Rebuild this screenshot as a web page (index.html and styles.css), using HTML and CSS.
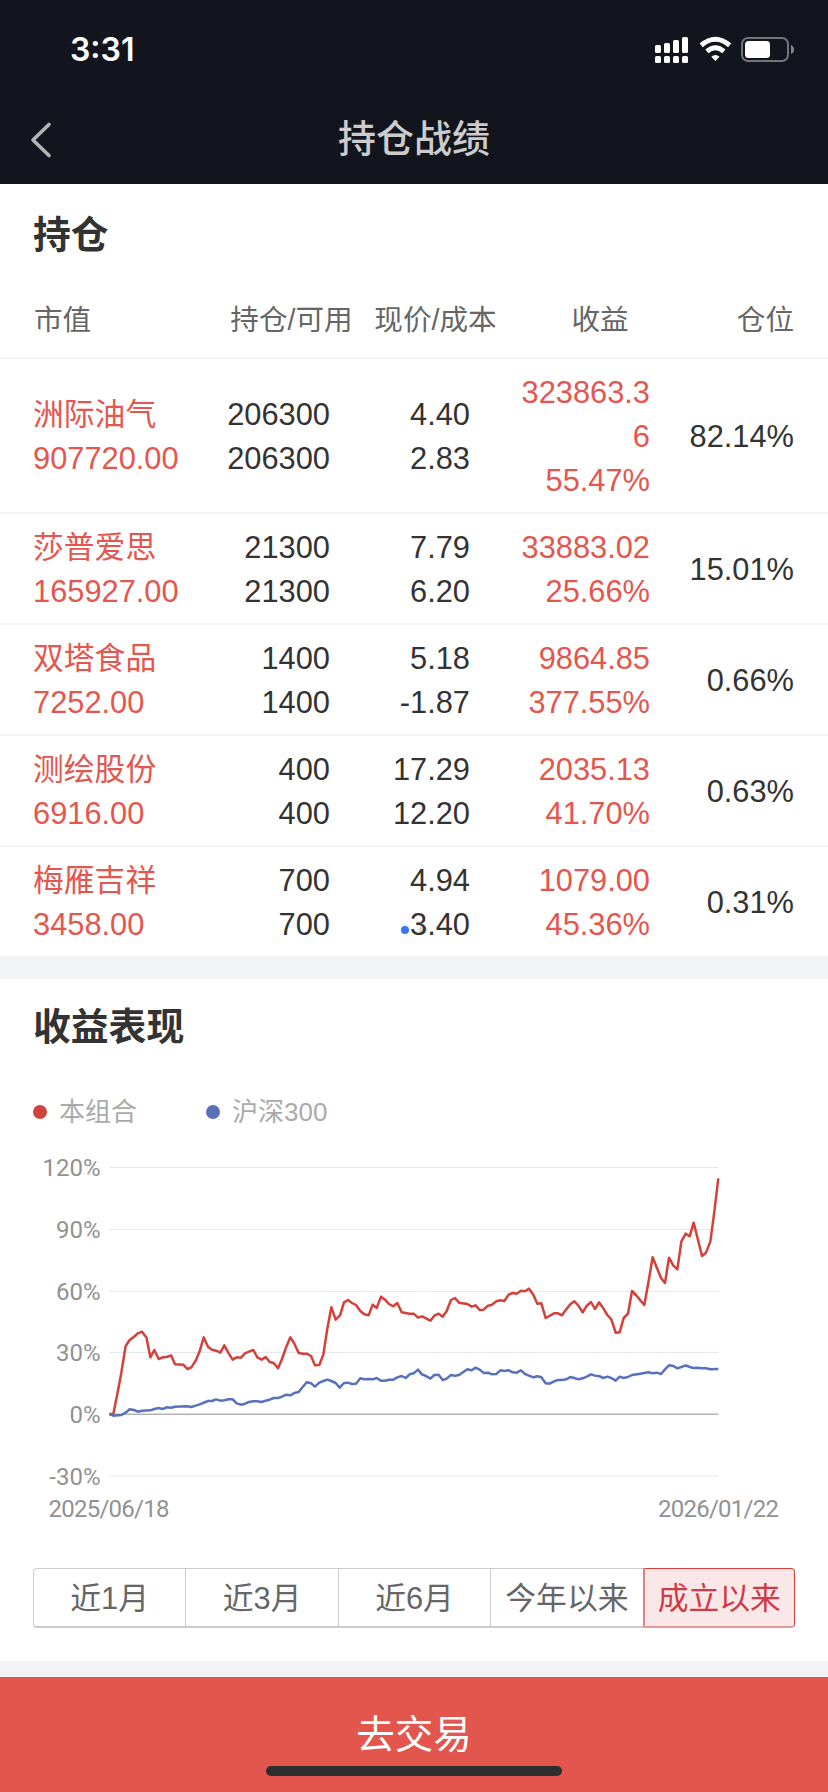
FILE: index.html
```html
<!DOCTYPE html>
<html lang="zh-CN">
<head>
  <meta charset="UTF-8">
  <meta name="viewport" content="width=device-width, initial-scale=1.0">
  <title>持仓战绩</title>
  <link rel="stylesheet" href="styles.css">
</head>
<body>
  <header class="header">
    <div class="status">
      <span class="time">3:31</span>
      <svg class="status-icons" width="140" height="28" viewBox="0 0 140 28">
        <g fill="#fff">
          <rect x="1" y="9" width="6" height="8" rx="1.5"/>
          <rect x="10" y="7" width="6" height="10" rx="1.5"/>
          <rect x="19" y="4" width="6" height="13" rx="1.5"/>
          <rect x="28" y="1" width="6" height="16" rx="1.5"/>
          <rect x="1" y="20" width="6" height="7" rx="1.5"/>
          <rect x="10" y="20" width="6" height="7" rx="1.5"/>
          <rect x="19" y="20" width="6" height="7" rx="1.5"/>
          <rect x="28" y="20" width="6" height="7" rx="1.5"/>
          <path d="M61.4 25 L57.3 20.8 Q61.4 17.2 65.5 20.8 Z"/>
        </g>
        <g fill="none" stroke="#fff" stroke-width="4.8">
          <path d="M47.2 9.4 Q61.4 -2.8 75.6 9.4"/>
          <path d="M52.9 15.4 Q61.4 8 69.9 15.4"/>
        </g>
        <rect x="88" y="2" width="46" height="23" rx="6" fill="none" stroke="#72757b" stroke-width="2"/>
        <rect x="91" y="5" width="25" height="17" rx="3.5" fill="#fff"/>
        <path d="M137 9 Q140 10.5 140 13.5 Q140 16.5 137 18 Z" fill="#85878c"/>
      </svg>
    </div>
    <div class="nav">
      <svg class="back" width="24" height="40" viewBox="0 0 24 40">
        <path d="M20 4.5 L4 20 L20 35.5" fill="none" stroke="#b4b4b4" stroke-width="3.6" stroke-linecap="round" stroke-linejoin="round"/>
      </svg>
      <h1>持仓战绩</h1>
    </div>
  </header>

  <section class="holdings">
    <h2>持仓</h2>
    <div class="table-head">
      <span>市值</span>
      <span>持仓/可用</span>
      <span>现价/成本</span>
      <span>收益</span>
      <span>仓位</span>
    </div>
    <div class="row">
      <div class="name">洲际油气<br>907720.00</div>
      <div>206300<br>206300</div>
      <div>4.40<br>2.83</div>
      <div class="profit">323863.36<br>55.47%</div>
      <div>82.14%</div>
    </div>
    <div class="row">
      <div class="name">莎普爱思<br>165927.00</div>
      <div>21300<br>21300</div>
      <div>7.79<br>6.20</div>
      <div class="profit">33883.02<br>25.66%</div>
      <div>15.01%</div>
    </div>
    <div class="row">
      <div class="name">双塔食品<br>7252.00</div>
      <div>1400<br>1400</div>
      <div>5.18<br>-1.87</div>
      <div class="profit">9864.85<br>377.55%</div>
      <div>0.66%</div>
    </div>
    <div class="row">
      <div class="name">测绘股份<br>6916.00</div>
      <div>400<br>400</div>
      <div>17.29<br>12.20</div>
      <div class="profit">2035.13<br>41.70%</div>
      <div>0.63%</div>
    </div>
    <div class="row">
      <div class="name">梅雁吉祥<br>3458.00</div>
      <div>700<br>700</div>
      <div>4.94<br><span class="marked">3.40</span></div>
      <div class="profit">1079.00<br>45.36%</div>
      <div>0.31%</div>
    </div>
  </section>

  <section class="performance">
    <h2>收益表现</h2>
    <div class="legend">
      <span class="legend-item"><i class="dot red"></i>本组合</span>
      <span class="legend-item"><i class="dot blue"></i>沪深300</span>
    </div>
    <svg class="chart" width="828" height="390" viewBox="0 0 828 390">
      <g class="grid">
        <path d="M109.5 17.5H718.5M109.5 79.5H718.5M109.5 141.5H718.5M109.5 202.5H718.5M109.5 326H718.5"/>
        <path class="zero" d="M109.5 264.2H718.5"/>
      </g>
      <g class="axis">
        <text x="100.5" y="26" text-anchor="end">120%</text>
        <text x="100.5" y="88" text-anchor="end">90%</text>
        <text x="100.5" y="149.5" text-anchor="end">60%</text>
        <text x="100.5" y="211" text-anchor="end">30%</text>
        <text x="100.5" y="273" text-anchor="end">0%</text>
        <text x="100.5" y="334.5" text-anchor="end">-30%</text>
        <text x="48.5" y="366.5" textLength="121">2025/06/18</text>
        <text x="658" y="366.5" textLength="121">2026/01/22</text>
      </g>
      <g class="lines" transform="translate(90 0) scale(.33333)">
        <polyline class="line-red" points="58,792 70,792 82,732 94,668 107,588 119,570 132,560 144,550 156,545 169,562 181,622 193,600 206,627 218,622 230,621 243,616 255,643 280,644 292,657 304,652 317,632 329,604 341,562 354,590 366,599 378,602 391,608 403,586 416,610 428,629 440,622 453,623 465,610 477,605 490,600 502,622 515,629 527,621 539,636 551,639 564,655 576,627 589,590 601,562 613,581 626,609 638,611 650,611 663,618 675,646 688,645 700,614 712,536 724,472 737,509 750,496 762,457 774,450 786,459 798,465 811,483 823,493 836,496 848,464 860,474 873,440 885,449 897,462 910,469 922,459 935,487 959,491 971,491 984,503 996,499 1008,505 1021,512 1033,497 1046,491 1058,500 1070,483 1083,450 1095,444 1107,458 1132,462 1145,470 1157,466 1169,480 1181,479 1194,467 1206,464 1219,454 1231,451 1243,453 1256,434 1268,429 1280,431 1293,422 1305,424 1317,416 1330,434 1342,461 1354,460 1367,504 1392,490 1404,490 1416,496 1429,478 1441,463 1453,454 1466,468 1478,487 1490,468 1503,456 1515,477 1527,457 1540,475 1552,495 1564,508 1577,548 1589,547 1601,504 1614,491 1626,423 1638,435 1651,451 1663,465 1675,398 1688,322 1700,352 1713,384 1725,399 1737,323 1750,347 1762,358 1774,275 1787,251 1799,259 1811,218 1824,270 1836,318 1848,308 1861,275 1873,185 1885,85"/>
        <polyline class="line-blue" points="58,792 70,797 94,795 107,788 119,778 132,780 144,785 156,782 181,781 193,777 206,774 218,777 230,772 243,773 255,770 292,769 304,771 317,767 329,763 354,753 366,753 378,748 391,752 403,751 416,748 428,748 440,760 453,764 465,761 477,756 490,754 502,754 515,756 527,752 539,749 551,744 564,744 576,740 589,734 601,736 613,729 626,726 638,711 650,697 663,700 675,710 688,698 700,693 712,689 724,693 737,699 749,713 762,699 774,698 786,702 798,701 811,685 823,688 836,687 848,688 860,684 873,692 885,692 897,689 910,689 922,682 935,678 947,684 959,673 971,670 984,659 996,673 1008,678 1021,686 1033,675 1046,674 1058,690 1070,686 1083,675 1095,677 1107,675 1119,667 1132,658 1145,661 1157,653 1169,659 1181,669 1194,668 1206,673 1219,672 1231,661 1243,663 1256,661 1268,667 1280,668 1293,661 1305,672 1317,677 1330,682 1342,679 1354,682 1367,700 1379,701 1392,694 1404,690 1416,690 1429,688 1441,681 1453,684 1466,688 1478,685 1490,680 1503,673 1515,677 1527,678 1540,684 1552,680 1564,684 1577,692 1589,680 1601,684 1614,681 1626,675 1651,671 1675,667 1688,670 1700,668 1713,672 1725,658 1737,646 1750,648 1762,655 1774,651 1787,646 1799,651 1811,654 1824,653 1836,655 1848,655 1861,658 1885,657"/>
      </g>
    </svg>
    <div class="tabs">
      <button>近1月</button>
      <button>近3月</button>
      <button>近6月</button>
      <button>今年以来</button>
      <button class="active">成立以来</button>
    </div>
  </section>

  <footer class="trade">
    <span>去交易</span>
    <i class="home-bar"></i>
  </footer>
</body>
</html>
```

FILE: styles.css
```css
* {
  box-sizing: border-box;
}

body {
  margin: 0;
  height: 1792px;
  display: flex;
  flex-direction: column;
  font-family: "Liberation Sans", "Noto Sans CJK SC", sans-serif;
  font-size: 30.8px;
  line-height: 44px;
  color: #333;
  background-color: #f2f3f5;
}

.header {
  height: 184px;
  background-color: #12151e;
}

.status {
  height: 96px;
  padding: 4px 34px 0 70px;
  display: flex;
  align-items: center;
  justify-content: space-between;
}

.time {
  font-family: Inter, sans-serif;
  font-size: 32px;
  font-weight: 600;
  color: #fff;
}

.status-icons {
  display: block;
}

.nav {
  height: 88px;
  padding: 0 29px;
  display: grid;
  grid-template-columns: 24px 1fr 24px;
  align-items: center;
}

h1 {
  margin: 0;
  padding-bottom: 2px;
  font-size: 38px;
  font-weight: 500;
  color: #ccc;
  text-align: center;
}

h2 {
  margin: 0;
  padding: 0 33px;
  font-size: 37.8px;
  font-weight: 700;
}

.holdings {
  height: 772px;
  background-color: #fff;
}

.holdings h2 {
  line-height: 102px;
}

.table-head {
  height: 73px;
  padding: 0 34px;
  display: grid;
  grid-template-columns: 179px 157px 131px 198px 95px;
  border-bottom: 2px solid #f4f4f5;
  font-size: 28.6px;
  line-height: 68px;
  color: #666;
  text-align: center;
}

.table-head span:first-child {
  text-align: left;
}

.table-head span:last-child {
  text-align: right;
}

.row {
  padding: 12px 34px 9px 33px;
  display: grid;
  grid-template-columns: 161px 136px 140px 180px 144px;
  align-items: center;
  border-bottom: 2px solid #f4f4f5;
  text-align: right;
}

.row:last-child {
  border-bottom: none;
}

.row .name {
  color: #e4564e;
  text-align: left;
}

.row .profit {
  padding-left: 40px;
  color: #e4564e;
  word-break: break-all;
}

.marked {
  position: relative;
  z-index: 0;
}

.marked::before,
.marked::after {
  content: "";
  position: absolute;
  left: -9px;
  top: 19px;
  width: 8px;
  height: 8px;
  border-radius: 50%;
  background-color: #3478f6;
}

.marked::after {
  left: 9px;
  z-index: -1;
  background-color: #d4d4d4;
}

.performance {
  height: 682px;
  margin-top: 23px;
  background-color: #fff;
}

.performance h2 {
  line-height: 96px;
}

.legend {
  height: 75px;
  padding: 0 33px 2px;
  display: flex;
  gap: 69px;
  font-size: 26px;
  color: #aaa;
}

.legend-item {
  display: flex;
  align-items: center;
}

.dot {
  width: 14px;
  height: 14px;
  margin-right: 12px;
  border-radius: 50%;
}

.red {
  background-color: #d0433b;
}

.blue {
  background-color: #5871b9;
}

.chart {
  display: block;
}

.grid path {
  fill: none;
  stroke: #e4e8f3;
  stroke-width: 1.2;
}

.grid .zero {
  stroke: #b4b4b4;
  stroke-width: 1.5;
}

.axis {
  font-family: Roboto, sans-serif;
  font-size: 24px;
  font-weight: 400;
  fill: #929292;
}

.lines polyline {
  fill: none;
  stroke-width: 7.5;
  stroke-linejoin: round;
}

.lines .line-red {
  stroke: #d4413b;
}

.lines .line-blue {
  stroke: #5871bd;
}

.tabs {
  height: 60px;
  margin: 28px 33px 0;
  display: grid;
  grid-template-columns: repeat(5, 1fr);
}

.tabs button {
  padding: 2px 0 0;
  border: 1px solid #ccc;
  border-right: none;
  border-bottom-width: 2px;
  background-color: #fff;
  font: inherit;
  color: #666;
}

.tabs button:first-child {
  border-radius: 4px 0 0 4px;
}

.tabs .active {
  border: 1px solid #d4413b;
  border-left: 2px solid #dd8583;
  border-bottom: 2px solid #e39a98;
  border-radius: 0 4px 4px 0;
  background-color: #fae8e8;
  color: #d23845;
}

.trade {
  position: relative;
  height: 115px;
  margin-top: 16px;
  background-color: #e3564d;
  color: #fff;
  font-size: 38.5px;
  line-height: 116px;
  text-align: center;
}

.home-bar {
  position: absolute;
  left: 266px;
  bottom: 16px;
  width: 296px;
  height: 10px;
  border-radius: 5px;
  background-color: #2e2e2e;
}
```
